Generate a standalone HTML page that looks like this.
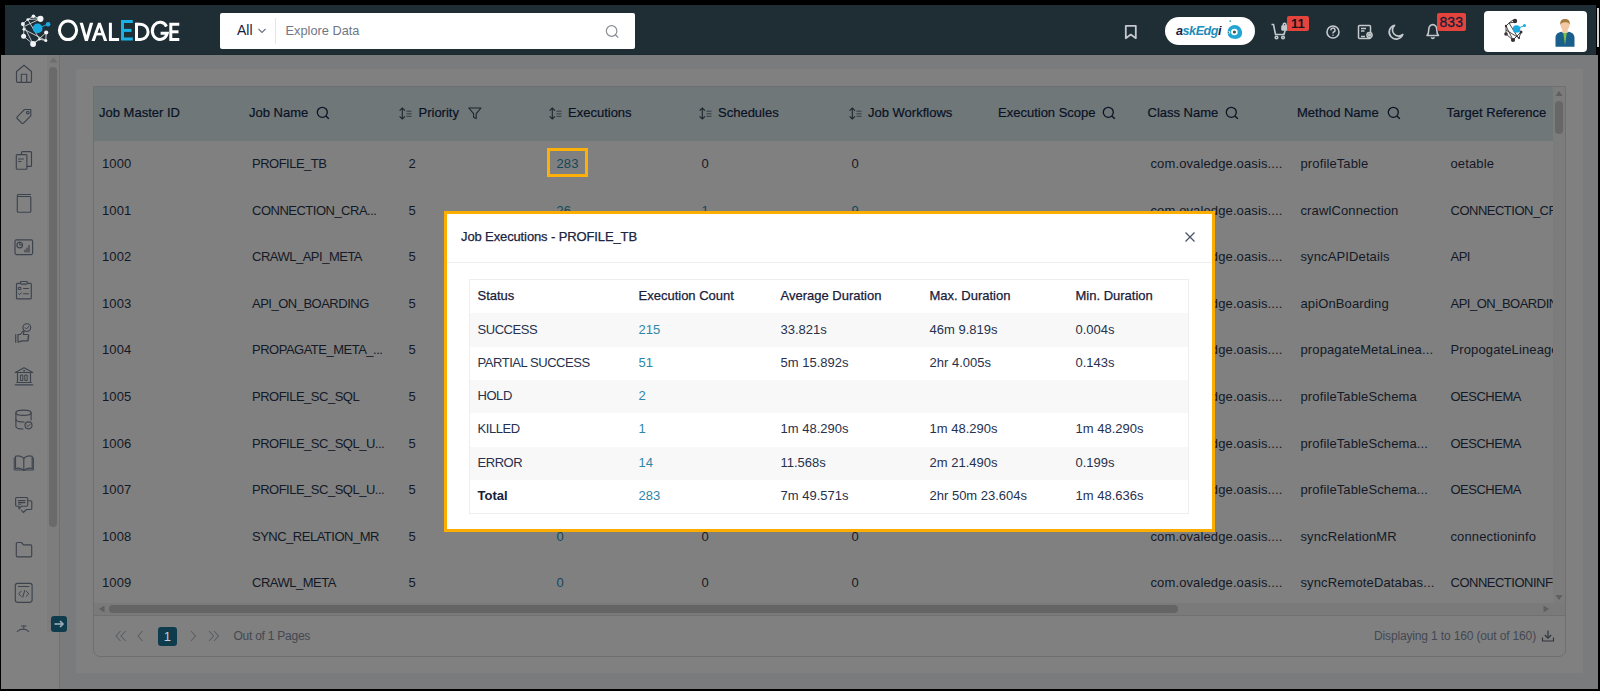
<!DOCTYPE html>
<html><head><meta charset="utf-8">
<style>
*{box-sizing:border-box;margin:0;padding:0}
html,body{width:1600px;height:691px;overflow:hidden;background:#000;font-family:"Liberation Sans",sans-serif;position:relative}
.a{position:absolute}
#hdr{left:5px;top:5px;width:1591px;height:50px;background:#1f2e35;border-bottom:1px solid #1b2930}
#side{left:1px;top:55px;width:58px;height:634px;background:#818181}
#sscroll{left:47px;top:55px;width:12px;height:577px;background:#7d7d7d}
#sline{left:59px;top:55px;width:1px;height:634px;background:#6f7073}
#main{left:60px;top:55px;width:1538px;height:634px;background:#7a7b7d}
#card{left:76px;top:69px;width:1507px;height:604px;background:#808080}
#tbl{left:93px;top:86px;width:1473px;height:571px;border:1px solid #6d6f73;border-radius:0 0 7px 7px;background:#808080;overflow:hidden}
#thead{left:0;top:0;width:1459px;height:54px;background:#6f7779}
.hc{position:absolute;top:-1px;height:54px;line-height:54px;font-size:13px;color:#0a1224;-webkit-text-stroke:0.2px #0a1224;white-space:nowrap}
.row{position:absolute;left:0;width:1459px;height:46.6px;border-top:1px solid #7f7f7f}
.c{position:absolute;top:-1px;line-height:45.6px;font-size:13px;color:#131926;white-space:nowrap;letter-spacing:0.12px}
.u{letter-spacing:-0.5px}
.lk{color:#14475a}
#tbody{left:0;top:54px;width:1459px;height:462px;overflow:hidden}
#vscroll{left:1459px;top:0;width:12px;height:517px;background:#7c7c7c}
#hscroll{left:0;top:516px;width:1471px;height:13px;background:#7a7a7a;border-bottom:1px solid #6f7175}
#tfoot{left:0;top:530px;width:1471px;height:40px}
.ft{position:absolute;top:0;line-height:39px;font-size:12px;letter-spacing:-0.15px;color:#434852;white-space:nowrap}
.box{position:absolute;top:6px;width:41px;height:29px;border:3px solid #fdb00a}
.mr{position:absolute;left:0;width:720px;height:33.3px}
.mc{position:absolute;top:-0.8px;line-height:33.3px;font-size:13px;color:#27314d;white-space:nowrap}
.mh{color:#18203a;-webkit-text-stroke:0.25px #18203a}
.ml{color:#2f86a8}
.mb{font-weight:bold;color:#18203a}
.mc.u{letter-spacing:-0.45px}
#modal{left:444px;top:211px;width:771px;height:321px;background:#fff;border:3px solid #fdac00}
.mt{position:absolute;font-size:13px;color:#1b2440;white-space:nowrap}
</style></head><body>
<div id="hdr" class="a"></div>
<svg class="a" style="left:0;top:0" width="200" height="56" viewBox="0 0 200 56">
 <g stroke="#e8ecef" stroke-width="0.9" fill="none" opacity="0.9">
  <polyline points="33.4,16.3 40.4,18.8 27.7,19.5 33.4,16.3"/>
  <polyline points="27.7,19.5 22.9,23.9 23.9,29.3 23.6,36.3 33.1,44 39.5,39.2 45.8,40.5 46.2,32.5"/>
  <line x1="22.9" y1="23.9" x2="33.1" y2="44"/>
  <line x1="27.7" y1="19.5" x2="39.5" y2="39.2"/>
  <line x1="23.9" y1="29.3" x2="45.8" y2="40.5"/>
  <line x1="33.1" y1="44" x2="46.2" y2="32.5"/>
  <line x1="40.4" y1="18.8" x2="25" y2="26"/>
 </g>
 <line x1="37.6" y1="28.4" x2="48.1" y2="24.2" stroke="#1aa7dc" stroke-width="1"/>
 <circle cx="37.6" cy="28.4" r="4.9" fill="#1ba9e1"/>
 <circle cx="48.1" cy="24.2" r="2.3" fill="#1ba9e1"/>
 <g fill="#f2f4f5">
  <circle cx="40.4" cy="18.8" r="3.1"/>
  <circle cx="33.4" cy="16.3" r="1.8"/>
  <circle cx="22.9" cy="23.9" r="2"/>
  <circle cx="23.9" cy="29.3" r="1.4"/>
  <circle cx="23.6" cy="36.3" r="2.5"/>
  <circle cx="33.1" cy="44" r="2.9"/>
  <circle cx="46.2" cy="32.5" r="2.1"/>
  <circle cx="45.8" cy="40.5" r="1.5"/>
  <circle cx="39.5" cy="39.2" r="1.2"/>
  <circle cx="27.7" cy="19.5" r="1.3"/>
 </g>
 <g stroke="#ffffff" stroke-width="3" fill="none">
  <ellipse cx="68" cy="30.3" rx="8.6" ry="9.3"/>
  
  
  
  <polyline points="110.4,22.8 110.4,39.5 119.1,39.5"/>
  <polyline points="136.5,22.8 136.5,39.5 141,39.5"/>
  <path d="M136.5 24.3 H140.5 A7.3 7.3 0 0 1 140.5 39.5"/>
  <path d="M166.5 26.5 A7.6 8.6 0 1 0 167.2 33.3 H160.6"/>
  <polyline points="179.3,24.3 170.8,24.3 170.8,39.5 179.3,39.5"/>
  <line x1="170.8" y1="31.8" x2="178.5" y2="31.8"/>
 </g>
<g fill="#fff"><polygon points="79.6,22.8 82.9,22.8 86.4,35.2 89.9,22.8 93.2,22.8 87.9,41 84.9,41"/><polygon points="91.5,41 98.1,22.8 100.7,22.8 107.2,41 104,41 99.4,27.6 94.8,41"/><rect x="95.5" y="32.8" width="7.8" height="2.6"/></g>
 <g stroke="#19b1e6" stroke-width="3" fill="none">
  <polyline points="132.8,21.5 122.5,21.5 122.5,39.1 132.8,39.1"/>
  <line x1="122.5" y1="30.4" x2="131.5" y2="30.4"/>
 </g>
</svg>
<div class="a" style="left:220px;top:13px;width:415px;height:35.5px;background:#fff;border-radius:2px"></div>
<div class="a" style="left:237px;top:13px;line-height:35px;font-size:14px;color:#15213b">All</div>
<svg class="a" style="left:257px;top:27px" width="10" height="8"><polyline points="1.5,2 5,5.5 8.5,2" fill="none" stroke="#6a7280" stroke-width="1.1"/></svg>
<div class="a" style="left:275px;top:17.5px;width:1px;height:26px;background:#e4e6ea"></div>
<div class="a" style="left:285.5px;top:13px;line-height:36px;font-size:12.8px;color:#6f7784">Explore Data</div>
<svg class="a" style="left:603px;top:23px" width="18" height="18"><circle cx="8.6" cy="8" r="5.3" fill="none" stroke="#8a8f96" stroke-width="1.2"/><line x1="12.4" y1="11.8" x2="15.2" y2="14.6" stroke="#8a8f96" stroke-width="1.3"/></svg>
<svg class="a" style="left:1122px;top:23px" width="18" height="18"><path d="M3.8 2.8 H13.8 V15.2 L8.8 11.6 L3.8 15.2 Z" fill="none" stroke="#c3c8cc" stroke-width="1.8" stroke-linejoin="round"/></svg>
<div class="a" style="left:1165px;top:16.5px;width:90px;height:28.5px;background:#fff;border-radius:15px"></div>
<div class="a" style="left:1176px;top:17px;line-height:28px;font-size:12.6px;font-weight:bold;font-style:italic;letter-spacing:-0.45px;color:#1e8cb8"><span style="color:#161d4a">a</span>skEdg<span style="color:#161d4a">i</span></div>
<svg class="a" style="left:1224px;top:20px" width="22" height="22" viewBox="0 0 22 22">
 <path d="M4.5 8.5 C6.5 5 11 4 14 5.8 C17 7.6 18.3 10.5 18.1 13.5 C17.9 16.8 15 18.9 11.5 18.9 C7.5 18.9 4.3 17.2 3.8 14 C3.5 12 3.6 10 4.5 8.5 Z" fill="#23a6d5"/>
 <circle cx="10.4" cy="12" r="3.3" fill="#fff"/><circle cx="10.4" cy="12" r="1.6" fill="#3c5a4a"/>
 <circle cx="5" cy="12.2" r="1.2" fill="#fff"/><circle cx="4.6" cy="12.2" r="0.8" fill="#3d6a55"/><circle cx="6.3" cy="1.2" r="0.9" fill="#4aa7a8"/>
</svg>
<svg class="a" style="left:1270px;top:21px" width="20" height="20" viewBox="0 0 20 20" fill="none" stroke="#c3c8cc" stroke-width="1.6">
 <path d="M1.5 3.5 H3.5 L5.5 13.5 H14 L15.2 9"/><circle cx="6.5" cy="16.5" r="1.3"/><circle cx="13" cy="16.5" r="1.3"/>
 <rect x="12" y="5" width="5.2" height="4" rx="0.6" fill="#c3c8cc"/><path d="M13.3 5 V3.5 A1.3 1.3 0 0 1 15.9 3.5 V5"/>
</svg>
<div class="a" style="left:1286.5px;top:15.5px;width:22.5px;height:15.5px;background:#e5443c;border-radius:2px;text-align:center;line-height:15.5px;font-size:13px;font-weight:bold;color:#15151f">11</div>
<svg class="a" style="left:1325px;top:24px" width="16" height="16"><circle cx="8" cy="8" r="6" fill="none" stroke="#c3c8cc" stroke-width="1.6"/><path d="M6 6.3 A2 2 0 1 1 8.6 8 C8 8.3 8 8.8 8 9.5" fill="none" stroke="#c3c8cc" stroke-width="1.5"/><circle cx="8" cy="11.3" r="0.75" fill="#c3c8cc"/></svg>
<svg class="a" style="left:1356px;top:23px" width="18" height="18" viewBox="0 0 18 18" fill="none" stroke="#c3c8cc" stroke-width="1.5">
 <rect x="2.5" y="2.5" width="12" height="13" rx="1"/><line x1="5" y1="5.5" x2="10" y2="5.5"/><line x1="5" y1="8" x2="8.5" y2="8"/><line x1="5" y1="13.5" x2="9" y2="13.5"/>
 <circle cx="13.5" cy="12" r="2.6" fill="#1f2e35"/><circle cx="13.5" cy="12" r="1" fill="#c3c8cc"/>
</svg>
<svg class="a" style="left:1387px;top:23px" width="18" height="18" viewBox="0 0 18 18"><path d="M7.5 2.3 A7 7 0 1 0 15.8 11.5 A5.6 5.6 0 0 1 7.5 2.3 Z" fill="none" stroke="#c3c8cc" stroke-width="1.7" stroke-linejoin="round"/></svg>
<svg class="a" style="left:1424px;top:22px" width="18" height="18" viewBox="0 0 18 18" fill="none" stroke="#c3c8cc" stroke-width="1.6">
 <path d="M3 13.5 H14.5 C13 12 12.8 10.5 12.8 8 C12.8 4.8 11 2.6 8.8 2.6 C6.5 2.6 4.7 4.8 4.7 8 C4.7 10.5 4.5 12 3 13.5Z" stroke-linejoin="round"/><path d="M7.3 15.3 A1.6 1.6 0 0 0 10.3 15.3"/>
</svg>
<div class="a" style="left:1436.5px;top:12.8px;width:29.5px;height:18px;background:#e5443c;border-radius:2px;text-align:center;line-height:18px;font-size:14px;-webkit-text-stroke:0.3px #1b1e38;color:#1b1e38">833</div>
<div class="a" style="left:1484px;top:10.5px;width:103px;height:41px;background:#fff;border-radius:4px"></div>
<svg class="a" style="left:1503px;top:17px" width="28" height="28" viewBox="0 0 28 28">
 <g stroke="#333" stroke-width="0.9" fill="none"><polyline points="6,6 10,3 12,5 6,6 3,9 3,13 3,17 10,23 14,19 16,21 18,15"/><line x1="3" y1="9" x2="10" y2="23"/><line x1="6" y1="6" x2="14" y2="19"/><line x1="3" y1="13" x2="16" y2="21"/><line x1="10" y1="23" x2="18" y2="15"/></g>
 <line x1="13.5" y1="12" x2="21.5" y2="8.5" stroke="#1ba9e1" stroke-width="1"/>
 <circle cx="13.5" cy="12" r="3.8" fill="#1ba9e1"/><circle cx="21.5" cy="8.5" r="1.5" fill="#1ba9e1"/>
 <g fill="#3a2f33"><circle cx="12" cy="4" r="2.2"/><circle cx="3" cy="9" r="1.2"/><circle cx="3" cy="17" r="1.8"/><circle cx="10" cy="23" r="2.1"/><circle cx="18" cy="15" r="1.5"/><circle cx="16" cy="21" r="1.1"/></g>
</svg>
<svg class="a" style="left:1554px;top:18px" width="22" height="30" viewBox="0 0 22 30">
 <path d="M1.5 28.8 V20 C1.5 16 4 14.5 7.5 13.8 L11 16 L14.5 13.8 C18 14.5 20.5 16 20.5 20 V28.8 Z" fill="#1a5f8c"/>
 <path d="M9.2 14.5 L11 27 L12.8 14.5 Z" fill="#7dc242"/>
 <rect x="8.3" y="9.5" width="5.4" height="5" fill="#f3c9a5"/>
 <ellipse cx="11" cy="7" rx="4.5" ry="5.2" fill="#f3c9a5"/>
 <path d="M6.3 7 C5.8 2.5 8 1 11 1 C14.2 1 16.3 2.6 15.7 7 C15 4.5 13 4 11 4.3 C8.5 4.5 7 5 6.3 7Z" fill="#a57c3b"/>
</svg>
<div class="a" style="left:1597px;top:8px;width:2px;height:39px;background:#d0d0d0"></div>
<div id="side" class="a"></div>
<div id="sscroll" class="a"><svg class="a" style="left:1.5px;top:1.5px" width="9" height="6"><polygon points="0.5,5.5 4.5,0.5 8.5,5.5" fill="#6d6d6d"/></svg><div class="a" style="left:2px;top:12px;width:7.5px;height:460px;border-radius:4px;background:#6a6a6a"></div><svg class="a" style="left:1.5px;top:566px" width="9" height="6"><polygon points="0.5,0.5 4.5,5.5 8.5,0.5" fill="#6d6d6d"/></svg></div>
<svg class="a" style="left:0;top:56px" width="47" height="600" viewBox="0 56 47 600" fill="none" stroke="#3d434d" stroke-width="1.15" stroke-linejoin="round" stroke-linecap="round">
 <!-- home -->
 <path d="M16.5 71.5 L24 65.3 L31.5 71.5 V81 A1.3 1.3 0 0 1 30.2 82.3 H17.8 A1.3 1.3 0 0 1 16.5 81 Z"/><path d="M21.3 82.3 V74.2 H26.7 V82.3"/>
 <!-- tag -->
 <path d="M17.2 116.8 L24.5 109.5 H30.8 V115.8 L23.5 123.1 A1.2 1.2 0 0 1 21.8 123.1 L17.2 118.5 A1.2 1.2 0 0 1 17.2 116.8 Z"/><circle cx="27.8" cy="112.6" r="1.3"/>
 <!-- docs -->
 <path d="M21.5 154.5 V152.6 A1 1 0 0 1 22.5 151.6 H30.5 A1 1 0 0 1 31.5 152.6 V165.4 A1 1 0 0 1 30.5 166.4 H27"/><rect x="16.3" y="154.6" width="10.6" height="14.6" rx="1"/><line x1="18.5" y1="159" x2="23.5" y2="159" stroke-width="1"/><line x1="18.5" y1="161.5" x2="21" y2="161.5" stroke-width="1"/>
 <!-- book -->
 <path d="M17.3 197 V211.2 A1 1 0 0 0 18.3 212.2 H29.8 A1 1 0 0 0 30.8 211.2 V197.5 A1 1 0 0 0 29.8 196.5 H18.3 A1 1 0 0 1 18.3 194.5 H30.5"/>
 <!-- dashboard -->
 <rect x="15" y="239.8" width="17.6" height="14.8" rx="1.5"/><circle cx="19.7" cy="245" r="2.8"/><path d="M19.7 242.2 V245 H22.5" stroke-width="1"/><line x1="25" y1="252" x2="25" y2="250" stroke-width="1.2"/><line x1="27" y1="252" x2="27" y2="248" stroke-width="1.2"/><line x1="29" y1="252" x2="29" y2="245.5" stroke-width="1.2"/>
 <!-- checklist -->
 <path d="M19.8 283.3 H17.5 A1 1 0 0 0 16.5 284.3 V297.9 A1 1 0 0 0 17.5 298.9 H30.3 A1 1 0 0 0 31.3 297.9 V284.3 A1 1 0 0 0 30.3 283.3 H28"/><rect x="20.5" y="281.5" width="6.8" height="2.6" rx="0.8"/><rect x="18.7" y="287.5" width="2.2" height="2" stroke-width="1"/><line x1="23.5" y1="288.5" x2="28.5" y2="288.5" stroke-width="1"/><path d="M18.5 293.7 L19.6 294.7 L21.4 292.7" stroke-width="1"/><line x1="23.5" y1="293.8" x2="28.5" y2="293.8" stroke-width="1"/>
 <!-- hand check -->
 <circle cx="26.8" cy="327.6" r="3.9"/><path d="M25.1 327.7 L26.4 329 L28.6 326.5" stroke-width="1"/><path d="M15.7 334.5 V342.2"/><path d="M18 334.5 H20.3 L23 331 L24 332 L23.2 334.5 H27.8 A1 1 0 0 1 27.8 336.5 A1 1 0 0 1 27.5 338.7 A1 1 0 0 1 27 340.9 H22 L18 342.2 Z"/>
 <!-- bank -->
 <path d="M15.3 372.5 L24 367.8 L32.7 372.5 Z"/><line x1="15.3" y1="384.8" x2="32.7" y2="384.8"/><line x1="16.8" y1="382.5" x2="31.2" y2="382.5"/><line x1="17.5" y1="373.5" x2="17.5" y2="382"/><line x1="30.5" y1="373.5" x2="30.5" y2="382"/><rect x="20.8" y="375" width="2" height="5.5" stroke-width="1"/><rect x="25.2" y="375" width="2" height="5.5" stroke-width="1"/><circle cx="24" cy="370.8" r="0.6" stroke-width="0.8"/>
 <!-- db check -->
 <ellipse cx="23.5" cy="412.8" rx="7.6" ry="2.6"/><path d="M15.9 412.8 V426.5 C15.9 428 19 429 23 429"/><path d="M31.1 412.8 V420"/><path d="M15.9 419.5 C15.9 421 19 422 24 422"/><circle cx="28.5" cy="425.3" r="3.5"/><path d="M26.9 425.4 L28.1 426.5 L30 424.4" stroke-width="1"/>
 <!-- open book -->
 <path d="M23.8 458.3 C21.5 456 18 455.5 15.5 456.3 V468.5 C18 467.8 21.5 468.3 23.8 470.5 C26 468.3 29.5 467.8 32.2 468.5 V456.3 C29.5 455.5 26 456 23.8 458.3 Z"/><line x1="23.8" y1="458.3" x2="23.8" y2="470.5"/><path d="M14.2 458 V470 H22 M25.6 470 H33.4 V458" stroke-width="1"/>
 <!-- chat -->
 <path d="M16.8 497.5 H26.5 A1.2 1.2 0 0 1 27.7 498.7 V505 A1.2 1.2 0 0 1 26.5 506.2 H21.5 L19 508.8 V506.2 H16.8 A1.2 1.2 0 0 1 15.6 505 V498.7 A1.2 1.2 0 0 1 16.8 497.5 Z"/><path d="M27.7 500.7 H30.6 A1.2 1.2 0 0 1 31.8 501.9 V508.3 A1.2 1.2 0 0 1 30.6 509.5 H26.5 L23.3 512.5 L21.3 510"/><line x1="18.5" y1="500.6" x2="25" y2="500.6" stroke-width="1.3"/><line x1="18.5" y1="502.6" x2="25" y2="502.6" stroke-width="1.3"/><line x1="18.5" y1="504.2" x2="21" y2="504.2" stroke-width="0.9"/>
 <!-- folder -->
 <path d="M16.3 543.5 A1 1 0 0 1 17.3 542.5 H21.5 L23.5 544.8 H30.7 A1 1 0 0 1 31.7 545.8 V555.8 A1 1 0 0 1 30.7 556.8 H17.3 A1 1 0 0 1 16.3 555.8 Z"/>
 <!-- code -->
 <rect x="15.3" y="583.3" width="16.8" height="19" rx="2.2"/><line x1="18.5" y1="586.5" x2="28.8" y2="586.5" stroke-width="1"/><path d="M21.2 591.2 L18.7 593.8 L21.2 596.3 M26.3 591.2 L28.8 593.8 L26.3 596.3 M24.7 590.5 L22.8 597.2" stroke-width="1"/>
 <!-- chevron -->
 <path d="M17.3 631.5 C20 628.3 26 628.3 28.7 631.5"/><path d="M21.5 626 H26 M23.8 626 V628.4" stroke-width="1"/>
</svg>

<div id="sline" class="a"></div>
<div id="main" class="a"></div>
<div id="card" class="a"></div>
<div class="a" style="left:51px;top:615.5px;width:16px;height:16.5px;border-radius:3px;background:#0f3c4d"></div>
<svg class="a" style="left:51px;top:615.5px" width="16" height="16" viewBox="0 0 16 16"><g stroke="#9fb1b9" stroke-width="1.6" fill="none"><line x1="3.5" y1="8" x2="12" y2="8"/><polyline points="9,5 12,8 9,11"/></g></svg>
<div id="tbl" class="a">
  <div id="thead" class="a"><div class="hc" style="left:5px">Job Master ID</div><div class="hc" style="left:155px">Job Name</div><div class="hc" style="left:324.5px">Priority</div><div class="hc" style="left:474px">Executions</div><div class="hc" style="left:624px">Schedules</div><div class="hc" style="left:774px">Job Workflows</div><div class="hc" style="left:904px">Execution Scope</div><div class="hc" style="left:1053.5px">Class Name</div><div class="hc" style="left:1203px">Method Name</div><div class="hc" style="left:1352.5px">Target Reference</div><svg class="a" style="left:222px;top:19px" width="15" height="15" viewBox="0 0 15 15"><circle cx="6.3" cy="6.3" r="5" fill="none" stroke="#0c1322" stroke-width="1.3"/><line x1="9.9" y1="9.9" x2="12.8" y2="12.8" stroke="#0c1322" stroke-width="1.4"/></svg><svg class="a" style="left:305px;top:20px" width="14" height="14" viewBox="0 0 14 14"><g fill="none" stroke="#20262e" stroke-width="1.1"><line x1="3.3" y1="1.2" x2="3.3" y2="11.8"/><polyline points="0.6,3.7 3.3,1 6,3.7"/><polyline points="0.6,9.3 3.3,12 6,9.3"/></g><g stroke="#30373f" stroke-width="0.9"><line x1="7.5" y1="4.2" x2="12.5" y2="4.2"/><line x1="7.5" y1="6.8" x2="12.5" y2="6.8"/><line x1="7.5" y1="9.3" x2="12.5" y2="9.3"/></g></svg><svg class="a" style="left:373.5px;top:20px" width="14" height="13" viewBox="0 0 14 13"><path d="M0.8 1 H13 L8.2 6.6 V11.6 L5.6 10.2 V6.6 Z" fill="none" stroke="#1e242c" stroke-width="1.1" stroke-linejoin="round"/></svg><svg class="a" style="left:455px;top:20px" width="14" height="14" viewBox="0 0 14 14"><g fill="none" stroke="#20262e" stroke-width="1.1"><line x1="3.3" y1="1.2" x2="3.3" y2="11.8"/><polyline points="0.6,3.7 3.3,1 6,3.7"/><polyline points="0.6,9.3 3.3,12 6,9.3"/></g><g stroke="#30373f" stroke-width="0.9"><line x1="7.5" y1="4.2" x2="12.5" y2="4.2"/><line x1="7.5" y1="6.8" x2="12.5" y2="6.8"/><line x1="7.5" y1="9.3" x2="12.5" y2="9.3"/></g></svg><svg class="a" style="left:605px;top:20px" width="14" height="14" viewBox="0 0 14 14"><g fill="none" stroke="#20262e" stroke-width="1.1"><line x1="3.3" y1="1.2" x2="3.3" y2="11.8"/><polyline points="0.6,3.7 3.3,1 6,3.7"/><polyline points="0.6,9.3 3.3,12 6,9.3"/></g><g stroke="#30373f" stroke-width="0.9"><line x1="7.5" y1="4.2" x2="12.5" y2="4.2"/><line x1="7.5" y1="6.8" x2="12.5" y2="6.8"/><line x1="7.5" y1="9.3" x2="12.5" y2="9.3"/></g></svg><svg class="a" style="left:755px;top:20px" width="14" height="14" viewBox="0 0 14 14"><g fill="none" stroke="#20262e" stroke-width="1.1"><line x1="3.3" y1="1.2" x2="3.3" y2="11.8"/><polyline points="0.6,3.7 3.3,1 6,3.7"/><polyline points="0.6,9.3 3.3,12 6,9.3"/></g><g stroke="#30373f" stroke-width="0.9"><line x1="7.5" y1="4.2" x2="12.5" y2="4.2"/><line x1="7.5" y1="6.8" x2="12.5" y2="6.8"/><line x1="7.5" y1="9.3" x2="12.5" y2="9.3"/></g></svg><svg class="a" style="left:1008px;top:19px" width="15" height="15" viewBox="0 0 15 15"><circle cx="6.3" cy="6.3" r="5" fill="none" stroke="#0c1322" stroke-width="1.3"/><line x1="9.9" y1="9.9" x2="12.8" y2="12.8" stroke="#0c1322" stroke-width="1.4"/></svg><svg class="a" style="left:1131px;top:19px" width="15" height="15" viewBox="0 0 15 15"><circle cx="6.3" cy="6.3" r="5" fill="none" stroke="#0c1322" stroke-width="1.3"/><line x1="9.9" y1="9.9" x2="12.8" y2="12.8" stroke="#0c1322" stroke-width="1.4"/></svg><svg class="a" style="left:1293px;top:19px" width="15" height="15" viewBox="0 0 15 15"><circle cx="6.3" cy="6.3" r="5" fill="none" stroke="#0c1322" stroke-width="1.3"/><line x1="9.9" y1="9.9" x2="12.8" y2="12.8" stroke="#0c1322" stroke-width="1.4"/></svg></div>
  <div id="tbody" class="a"><div class="row" style="top:0.0px"><div class="c" style="left:8px">1000</div><div class="c u" style="left:158px">PROFILE_TB</div><div class="c" style="left:314.5px">2</div><div class="box" style="left:453px"></div><div class="c lk" style="left:462.5px">283</div><div class="c" style="left:607.5px">0</div><div class="c" style="left:757.5px">0</div><div class="c" style="left:1056.5px">com.ovaledge.oasis....</div><div class="c" style="left:1206.5px">profileTable</div><div class="c" style="left:1356.5px">oetable</div></div>
<div class="row" style="top:46.6px"><div class="c" style="left:8px">1001</div><div class="c u" style="left:158px">CONNECTION_CRA...</div><div class="c" style="left:314.5px">5</div><div class="c lk" style="left:462.5px">26</div><div class="c lk" style="left:607.5px">1</div><div class="c lk" style="left:757.5px">9</div><div class="c" style="left:1056.5px">com.ovaledge.oasis....</div><div class="c" style="left:1206.5px">crawlConnection</div><div class="c u" style="left:1356.5px">CONNECTION_CRAWL</div></div>
<div class="row" style="top:93.2px"><div class="c" style="left:8px">1002</div><div class="c u" style="left:158px">CRAWL_API_META</div><div class="c" style="left:314.5px">5</div><div class="c" style="left:1056.5px">com.ovaledge.oasis....</div><div class="c" style="left:1206.5px">syncAPIDetails</div><div class="c u" style="left:1356.5px">API</div></div>
<div class="row" style="top:139.8px"><div class="c" style="left:8px">1003</div><div class="c u" style="left:158px">API_ON_BOARDING</div><div class="c" style="left:314.5px">5</div><div class="c" style="left:1056.5px">com.ovaledge.oasis....</div><div class="c" style="left:1206.5px">apiOnBoarding</div><div class="c u" style="left:1356.5px">API_ON_BOARDING</div></div>
<div class="row" style="top:186.4px"><div class="c" style="left:8px">1004</div><div class="c u" style="left:158px">PROPAGATE_META_...</div><div class="c" style="left:314.5px">5</div><div class="c" style="left:1056.5px">com.ovaledge.oasis....</div><div class="c" style="left:1206.5px">propagateMetaLinea...</div><div class="c" style="left:1356.5px">PropogateLineage</div></div>
<div class="row" style="top:233.0px"><div class="c" style="left:8px">1005</div><div class="c u" style="left:158px">PROFILE_SC_SQL</div><div class="c" style="left:314.5px">5</div><div class="c" style="left:1056.5px">com.ovaledge.oasis....</div><div class="c" style="left:1206.5px">profileTableSchema</div><div class="c u" style="left:1356.5px">OESCHEMA</div></div>
<div class="row" style="top:279.6px"><div class="c" style="left:8px">1006</div><div class="c u" style="left:158px">PROFILE_SC_SQL_U...</div><div class="c" style="left:314.5px">5</div><div class="c" style="left:1056.5px">com.ovaledge.oasis....</div><div class="c" style="left:1206.5px">profileTableSchema...</div><div class="c u" style="left:1356.5px">OESCHEMA</div></div>
<div class="row" style="top:326.2px"><div class="c" style="left:8px">1007</div><div class="c u" style="left:158px">PROFILE_SC_SQL_U...</div><div class="c" style="left:314.5px">5</div><div class="c" style="left:1056.5px">com.ovaledge.oasis....</div><div class="c" style="left:1206.5px">profileTableSchema...</div><div class="c u" style="left:1356.5px">OESCHEMA</div></div>
<div class="row" style="top:372.8px"><div class="c" style="left:8px">1008</div><div class="c u" style="left:158px">SYNC_RELATION_MR</div><div class="c" style="left:314.5px">5</div><div class="c lk" style="left:462.5px">0</div><div class="c" style="left:607.5px">0</div><div class="c" style="left:757.5px">0</div><div class="c" style="left:1056.5px">com.ovaledge.oasis....</div><div class="c" style="left:1206.5px">syncRelationMR</div><div class="c" style="left:1356.5px">connectioninfo</div></div>
<div class="row" style="top:419.4px"><div class="c" style="left:8px">1009</div><div class="c u" style="left:158px">CRAWL_META</div><div class="c" style="left:314.5px">5</div><div class="c lk" style="left:462.5px">0</div><div class="c" style="left:607.5px">0</div><div class="c" style="left:757.5px">0</div><div class="c" style="left:1056.5px">com.ovaledge.oasis....</div><div class="c" style="left:1206.5px">syncRemoteDatabas...</div><div class="c u" style="left:1356.5px">CONNECTIONINFO</div></div>
</div>
  <div id="vscroll" class="a"><svg class="a" style="left:2px;top:3px" width="8" height="7"><polygon points="0.5,6 4,0.8 7.5,6" fill="#606060"/></svg><div class="a" style="left:2px;top:13.5px;width:7.5px;height:33.5px;border-radius:4px;background:#676767"></div><svg class="a" style="left:2px;top:507px" width="8" height="7"><polygon points="0.5,1 4,6.2 7.5,1" fill="#606060"/></svg></div>
  <div id="hscroll" class="a"><svg class="a" style="left:4px;top:2px" width="7" height="8"><polygon points="6.5,0.5 0.8,4 6.5,7.5" fill="#606060"/></svg><div class="a" style="left:14.5px;top:2px;width:1069px;height:7.5px;border-radius:4px;background:#646464"></div><svg class="a" style="left:1449px;top:2px" width="7" height="8"><polygon points="0.5,0.5 6.2,4 0.5,7.5" fill="#606060"/></svg></div>
  <div id="tfoot" class="a">
    <svg class="a" style="left:20px;top:13px" width="14" height="12" viewBox="0 0 14 12" fill="none" stroke="#5a5e64" stroke-width="1.1"><polyline points="6.5,1 2,6 6.5,11"/><polyline points="11.5,1 7,6 11.5,11"/></svg>
    <svg class="a" style="left:42px;top:13px" width="9" height="12" viewBox="0 0 9 12" fill="none" stroke="#5a5e64" stroke-width="1.1"><polyline points="6.5,1 2,6 6.5,11"/></svg>
    <div class="a" style="left:63.5px;top:9.5px;width:19.5px;height:19.5px;border-radius:3px;background:#0f3c4d;color:#c8ccd0;font-size:13px;line-height:19.5px;text-align:center">1</div>
    <svg class="a" style="left:94.5px;top:13px" width="9" height="12" viewBox="0 0 9 12" fill="none" stroke="#5a5e64" stroke-width="1.1"><polyline points="2,1 6.5,6 2,11"/></svg>
    <svg class="a" style="left:112.5px;top:13px" width="14" height="12" viewBox="0 0 14 12" fill="none" stroke="#5a5e64" stroke-width="1.1"><polyline points="2,1 6.5,6 2,11"/><polyline points="7,1 11.5,6 7,11"/></svg>
    <div class="ft" style="left:139.5px;letter-spacing:-0.25px">Out of 1 Pages</div>
    <div class="ft" style="right:29px">Displaying 1 to 160 (out of 160)</div>
    <svg class="a" style="left:1447px;top:12px" width="14" height="14" viewBox="0 0 14 14" fill="none" stroke="#30353c" stroke-width="1.2"><line x1="7" y1="1.5" x2="7" y2="9"/><polyline points="3.8,6 7,9.2 10.2,6"/><polyline points="1.5,8.5 1.5,12 12.5,12 12.5,8.5"/></svg>
  </div>
</div>
<div id="modal" class="a">
 <div class="a" style="left:14px;top:0;line-height:46px;font-size:13px;color:#1b2440;-webkit-text-stroke:0.25px #1b2440;letter-spacing:-0.12px;white-space:nowrap">Job Executions - PROFILE_TB</div>
 <svg class="a" style="left:737px;top:17px" width="12" height="12" viewBox="0 0 12 12"><g stroke="#4a5568" stroke-width="1.2"><line x1="1.5" y1="1.5" x2="10.5" y2="10.5"/><line x1="10.5" y1="1.5" x2="1.5" y2="10.5"/></g></svg>
 <div class="a" style="left:0;top:48px;width:765px;height:1px;background:#eeeeee"></div>
 <div class="a" style="left:22px;top:65px;width:720px;height:235px;border:1px solid #eeeeee;overflow:hidden"><div class="mr" style="top:0.0px;background:#fff"><div class="mc mh" style="left:7.5px">Status</div><div class="mc mh" style="left:168.5px">Execution Count</div><div class="mc mh" style="left:310.5px">Average Duration</div><div class="mc mh" style="left:459.5px">Max. Duration</div><div class="mc mh" style="left:605.5px">Min. Duration</div></div><div class="mr" style="top:33.3px;background:#f8f8f8"><div class="mc u" style="left:7.5px">SUCCESS</div><div class="mc ml" style="left:168.5px">215</div><div class="mc" style="left:310.5px">33.821s</div><div class="mc" style="left:459.5px">46m 9.819s</div><div class="mc" style="left:605.5px">0.004s</div></div><div class="mr" style="top:66.6px;background:#fff"><div class="mc u" style="left:7.5px">PARTIAL SUCCESS</div><div class="mc ml" style="left:168.5px">51</div><div class="mc" style="left:310.5px">5m 15.892s</div><div class="mc" style="left:459.5px">2hr 4.005s</div><div class="mc" style="left:605.5px">0.143s</div></div><div class="mr" style="top:99.9px;background:#f8f8f8"><div class="mc u" style="left:7.5px">HOLD</div><div class="mc ml" style="left:168.5px">2</div></div><div class="mr" style="top:133.2px;background:#fff"><div class="mc u" style="left:7.5px">KILLED</div><div class="mc ml" style="left:168.5px">1</div><div class="mc" style="left:310.5px">1m 48.290s</div><div class="mc" style="left:459.5px">1m 48.290s</div><div class="mc" style="left:605.5px">1m 48.290s</div></div><div class="mr" style="top:166.5px;background:#f8f8f8"><div class="mc u" style="left:7.5px">ERROR</div><div class="mc ml" style="left:168.5px">14</div><div class="mc" style="left:310.5px">11.568s</div><div class="mc" style="left:459.5px">2m 21.490s</div><div class="mc" style="left:605.5px">0.199s</div></div><div class="mr" style="top:199.8px;background:#fff"><div class="mc mb" style="left:7.5px">Total</div><div class="mc ml" style="left:168.5px">283</div><div class="mc" style="left:310.5px">7m 49.571s</div><div class="mc" style="left:459.5px">2hr 50m 23.604s</div><div class="mc" style="left:605.5px">1m 48.636s</div></div></div>
</div>
</body></html>
